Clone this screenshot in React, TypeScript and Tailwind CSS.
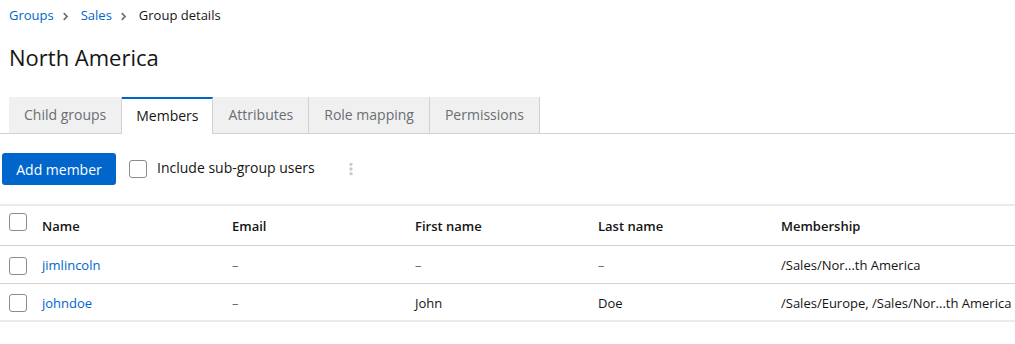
import { EllipsisVertical } from 'lucide-react';

const tabs = ['Child groups', 'Members', 'Attributes', 'Role mapping', 'Permissions'];

const members = [
  { username: 'jimlincoln', email: '', firstName: '', lastName: '', membership: '/Sales/Nor...th America' },
  { username: 'johndoe', email: '', firstName: 'John', lastName: 'Doe', membership: '/Sales/Europe, /Sales/Nor...th America' },
];

function Checkbox() {
  return <span className="block w-[18px] h-[18px] rounded-[3px] border border-[#8a8d90] bg-white" />;
}

function Chevron() {
  return (
    <svg className="w-[7px] h-[9px] ml-[9px] mr-[11px] text-[#6a6e73]" viewBox="0 0 8 10" fill="currentColor">
      <path d="M1.5 0.5 L6 5 L1.5 9.5 L0.2 8.2 L3.4 5 L0.2 1.8 Z" />
    </svg>
  );
}

export default function App() {
  return (
    <div className="w-[1015px] h-[344px] bg-white text-[#151515] font-['Open_Sans',sans-serif] overflow-hidden">
      {/* Breadcrumb */}
      <nav className="flex items-center h-[32px] pl-[9px] text-[13px]">
        <a className="text-[#0066cc]">Groups</a>
        <Chevron />
        <a className="text-[#0066cc]">Sales</a>
        <Chevron />
        <span>Group details</span>
      </nav>

      {/* Title */}
      <h1 className="pl-[9px] h-[50px] flex items-center text-[22px] leading-none">North America</h1>

      {/* Tabs */}
      <div className="mt-[15px] flex border-b border-[#d2d2d2] h-[37px]">
        <div className="w-[9px]" />
        {tabs.map((tab) => {
          const active = tab === 'Members';
          return (
            <div
              key={tab}
              className={
                active
                  ? 'relative -mb-px flex items-center px-[14px] pb-[3px] bg-white border-r border-[#d2d2d2] text-[#151515] text-[14px] border-t-2 border-t-[#0066cc]'
                  : 'flex items-center px-[15px] pb-[1px] bg-[#f0f0f0] border-r border-[#d2d2d2] text-[#6a6e73] text-[14px]'
              }
            >
              {tab}
            </div>
          );
        })}
      </div>

      {/* Toolbar */}
      <div className="flex items-center h-[70px] pl-[2px]">
        <button className="h-[32px] w-[114px] rounded-[3px] bg-[#0066cc] text-white text-[14px]">Add member</button>
        <label className="flex items-center ml-[13px] gap-[10px] text-[14px]">
          <Checkbox />
          <span className="-mt-[3px]">Include sub-group users</span>
        </label>
        <EllipsisVertical className="ml-[28px] w-[16px] h-[16px] text-[#c7c7c7]" strokeWidth={3} />
      </div>

      {/* Table */}
      <table className="w-full text-[13px] border-collapse whitespace-nowrap">
        <thead>
          <tr className="h-[40px] border-t-2 border-[#ebebeb] border-b border-b-[#d2d2d2]">
            <th className="w-[42px] pl-[9px] pb-[6px] text-left">
              <Checkbox />
            </th>
            <th className="w-[190px] pt-[3px] text-left font-semibold">Name</th>
            <th className="w-[183px] pt-[3px] text-left font-semibold">Email</th>
            <th className="w-[183px] pt-[3px] text-left font-semibold">First name</th>
            <th className="w-[183px] pt-[3px] text-left font-semibold">Last name</th>
            <th className="pt-[3px] text-left font-semibold">Membership</th>
          </tr>
        </thead>
        <tbody>
          {members.map((m, i) => (
            <tr
              key={m.username}
              className={
                i === members.length - 1
                  ? 'h-[38px] border-b-2 border-[#ebebeb]'
                  : 'h-[38px] border-b border-[#d2d2d2]'
              }
            >
              <td className="pl-[9px] pt-[3px]">
                <Checkbox />
              </td>
              <td className="pt-[3px] text-[#0066cc]">{m.username}</td>
              <td className="pt-[3px] text-[#6a6e73]">{m.email || '–'}</td>
              <td className={m.firstName ? 'pt-[3px]' : 'pt-[3px] text-[#6a6e73]'}>{m.firstName || '–'}</td>
              <td className={m.lastName ? 'pt-[3px]' : 'pt-[3px] text-[#6a6e73]'}>{m.lastName || '–'}</td>
              <td className="pt-[3px]">{m.membership}</td>
            </tr>
          ))}
        </tbody>
      </table>
    </div>
  );
}
